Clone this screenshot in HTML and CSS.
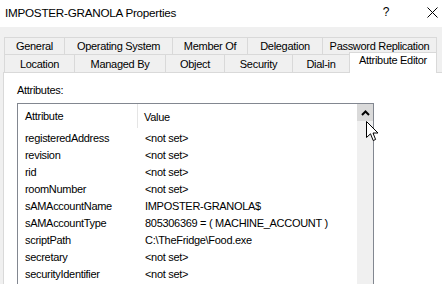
FILE: index.html
```html
<!DOCTYPE html>
<html lang="en">
<head>
    <meta charset="UTF-8">
    <title>IMPOSTER-GRANOLA Properties</title>
    <link rel="stylesheet" href="styles.css">
</head>
<body>
    <div class="titlebar">
        <span class="title">IMPOSTER-GRANOLA Properties</span>
        <span class="help">?</span>
        <svg class="close" width="11" height="11" viewBox="0 0 11 11">
            <path d="M0.5 0.5 L10.5 10.5 M10.5 0.5 L0.5 10.5" stroke="#000" stroke-width="1" fill="none"/>
        </svg>
    </div>

    <div class="tabs">
        <div class="tabrow row1">
            <div class="tab">General</div>
            <div class="tab">Operating System</div>
            <div class="tab">Member Of</div>
            <div class="tab">Delegation</div>
            <div class="tab last">Password Replication</div>
        </div>
        <div class="tabrow row2">
            <div class="tab">Location</div>
            <div class="tab">Managed By</div>
            <div class="tab">Object</div>
            <div class="tab">Security</div>
            <div class="tab">Dial-in</div>
            <div class="tab selected">Attribute Editor</div>
        </div>
    </div>

    <div class="panel">
        <div class="label">Attributes:</div>
        <div class="listbox">
            <div class="list">
                <div class="head">
                    <div class="cell name">Attribute</div>
                    <div class="cell value">Value</div>
                </div>
                <div class="row"><div class="cell name">registeredAddress</div><div class="cell value">&lt;not set&gt;</div></div>
                <div class="row"><div class="cell name">revision</div><div class="cell value">&lt;not set&gt;</div></div>
                <div class="row"><div class="cell name">rid</div><div class="cell value">&lt;not set&gt;</div></div>
                <div class="row"><div class="cell name">roomNumber</div><div class="cell value">&lt;not set&gt;</div></div>
                <div class="row"><div class="cell name">sAMAccountName</div><div class="cell value">IMPOSTER-GRANOLA$</div></div>
                <div class="row"><div class="cell name">sAMAccountType</div><div class="cell value">805306369 = ( MACHINE_ACCOUNT )</div></div>
                <div class="row"><div class="cell name">scriptPath</div><div class="cell value">C:\TheFridge\Food.exe</div></div>
                <div class="row"><div class="cell name">secretary</div><div class="cell value">&lt;not set&gt;</div></div>
                <div class="row"><div class="cell name">securityIdentifier</div><div class="cell value">&lt;not set&gt;</div></div>
            </div>
            <div class="scrollbar">
                <div class="scroll-up">
                    <svg width="9" height="6" viewBox="0 0 9 6">
                        <path d="M1 5 L4.5 1.5 L8 5" stroke="#000" stroke-width="2" fill="none"/>
                    </svg>
                </div>
            </div>
        </div>
    </div>

    <svg class="cursor" width="13" height="21" viewBox="0 0 13 21">
        <path d="M0.5 0.5 L0.5 16.5 L4.5 12.8 L7.2 19.5 L9.6 18.5 L7 12 L12 12 Z" fill="#fff" stroke="#000" stroke-width="1" stroke-linejoin="miter"/>
    </svg>
</body>
</html>
```

FILE: styles.css
```css
body {
    margin: 0;
    width: 442px;
    height: 284px;
    overflow: hidden;
    position: relative;
    background: #f0f0f0;
    font-family: "Liberation Sans", Arial, sans-serif;
    font-size: 11px;
    letter-spacing: -0.3px;
    color: #000;
    display: flex;
    flex-direction: column;
}
.titlebar {
    height: 27px;
    background: #fff;
    display: flex;
    align-items: center;
    padding: 0 4px 3px 5px;
    box-sizing: border-box;
    flex-shrink: 0;
}
.title {
    font-size: 11.7px;
    letter-spacing: -0.25px;
    flex: 1;
}
.help {
    font-size: 12px;
    margin-right: 38px;
}
.close {
    display: block;
}
.tabs {
    margin: 10px 0 0 4px;
    flex-shrink: 0;
}
.tabrow {
    display: grid;
}
.row1 {
    grid-template-columns: 60px 108px 75px 75px 115px;
    height: 17px;
}
.row2 {
    grid-template-columns: 70px 91px 59px 68px 57px 88px;
    height: 18px;
    align-items: end;
}
.tab {
    box-sizing: border-box;
    height: 100%;
    border-left: 1px solid #d9d9d9;
    border-top: 1px solid #d9d9d9;
    display: flex;
    align-items: center;
    justify-content: center;
    white-space: nowrap;
}
.tab.last {
    border-right: 1px solid #d9d9d9;
}
.tab.selected {
    height: 21px;
    margin-top: -2px;
    margin-bottom: -1px;
    align-self: end;
    background: #fff;
    border-right: 1px solid #d9d9d9;
    align-items: flex-start;
    padding-top: 1px;
    position: relative;
    z-index: 1;
}
.panel {
    flex: 1;
    margin-left: 3px;
    background: #fff;
    border-left: 1px solid #d9d9d9;
    border-top: 1px solid #d9d9d9;
    padding: 9px 0 0 13px;
    min-height: 0;
    overflow: hidden;
}
.label {
    line-height: 17px;
    margin-bottom: 4px;
}
.listbox {
    width: 357px;
    height: 181px;
    box-sizing: border-box;
    border: 1px solid #828790;
    border-bottom: none;
    display: flex;
}
.list {
    flex: 1;
}
.head {
    height: 25px;
    display: flex;
    align-items: center;
}
.head .name {
    border-right: 1px solid #e5e5e5;
    height: 24px;
    align-self: flex-start;
    display: flex;
    align-items: center;
}
.row {
    height: 17px;
    display: flex;
    align-items: center;
}
.cell {
    white-space: nowrap;
}
.cell.name {
    width: 120px;
    padding-left: 7px;
    box-sizing: border-box;
}
.cell.value {
    padding-left: 7px;
}
.head .cell.value {
    padding-left: 6px;
}
.scrollbar {
    width: 16px;
    background: #f0f0f0;
}
.scroll-up {
    height: 17px;
    background: #dadada;
    display: flex;
    align-items: center;
    justify-content: center;
}
.scroll-up svg {
    display: block;
}
.cursor {
    position: absolute;
    left: 366px;
    top: 121px;
}
```
